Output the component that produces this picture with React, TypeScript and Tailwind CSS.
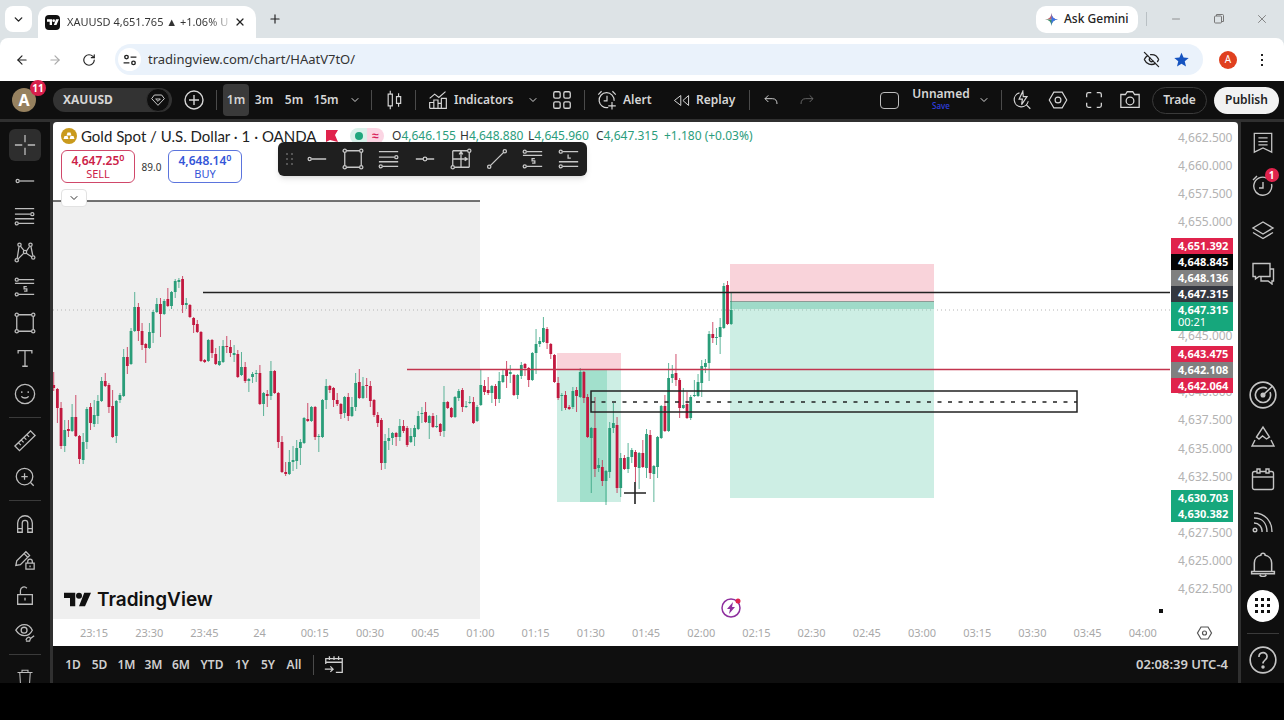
import React from "react";
import {
  ArrowLeft,
  ArrowRight,
  ChevronDown,
  EyeOff,
  Minus,
  Plus,
  RotateCw,
  X,
} from "lucide-react";
import clsx from "clsx";

const UP = "#2a9d79";
const DOWN = "#c2183f";

// [direction, high, body top, body bottom, low]
type Candle = [0 | 1, number, number, number, number];

const CANDLES: Candle[] = [
  [0, 372, 385, 388, 391], [0, 388, 389, 408, 423], [0, 402, 408, 446, 449], [1, 420, 430, 446, 452],
  [0, 420, 429, 431, 437], [1, 404, 417, 431, 432], [0, 395, 417, 436, 437], [0, 435, 436, 459, 464],
  [1, 433, 442, 460, 464], [1, 407, 409, 442, 449], [0, 403, 407, 423, 430], [1, 400, 415, 424, 427],
  [1, 395, 401, 416, 424], [1, 377, 381, 401, 402], [0, 373, 381, 386, 387], [0, 383, 385, 407, 413],
  [0, 390, 406, 437, 438], [1, 400, 401, 436, 443], [1, 393, 395, 400, 403], [1, 349, 357, 396, 397],
  [0, 347, 357, 366, 374], [1, 328, 331, 364, 365], [1, 292, 307, 331, 332], [0, 303, 307, 331, 341],
  [0, 323, 331, 345, 350], [0, 343, 344, 348, 363], [1, 323, 332, 348, 349], [1, 310, 312, 333, 343],
  [1, 298, 304, 312, 313], [0, 298, 304, 314, 337], [1, 299, 301, 314, 315], [0, 288, 299, 306, 307],
  [1, 291, 292, 306, 309], [1, 279, 281, 292, 298], [1, 278, 280, 282, 288], [0, 276, 279, 305, 313],
  [1, 298, 303, 305, 309], [0, 304, 305, 317, 318], [0, 317, 318, 325, 333], [0, 320, 324, 332, 333],
  [0, 331, 332, 361, 362], [0, 359, 360, 362, 363], [1, 339, 340, 361, 362], [0, 339, 340, 353, 358],
  [0, 348, 354, 364, 365], [1, 346, 361, 365, 366], [1, 340, 346, 362, 363], [0, 336, 346, 347, 353],
  [0, 340, 347, 353, 357], [1, 345, 353, 355, 362], [0, 350, 354, 377, 378], [1, 352, 367, 375, 376],
  [0, 362, 367, 381, 383], [1, 378, 379, 381, 392], [1, 372, 374, 377, 383], [1, 370, 373, 374, 382],
  [0, 365, 373, 404, 405], [1, 392, 393, 404, 416], [0, 390, 394, 396, 407], [1, 361, 371, 396, 400],
  [0, 370, 371, 393, 394], [0, 392, 393, 442, 448], [0, 436, 442, 472, 473], [0, 462, 472, 474, 476],
  [1, 450, 462, 474, 475], [1, 446, 460, 462, 471], [1, 440, 448, 461, 469], [1, 439, 442, 448, 465],
  [1, 417, 418, 443, 444], [0, 403, 419, 421, 422], [1, 406, 407, 421, 422], [0, 406, 407, 437, 440],
  [1, 434, 436, 437, 452], [1, 399, 400, 437, 438], [1, 379, 386, 400, 409], [0, 385, 386, 390, 393],
  [0, 387, 388, 400, 407], [0, 393, 400, 404, 406], [0, 403, 404, 414, 419], [1, 396, 397, 413, 418],
  [0, 393, 397, 416, 421], [1, 397, 407, 416, 417], [1, 373, 383, 407, 411], [0, 369, 382, 398, 399],
  [1, 377, 386, 398, 399], [0, 378, 385, 386, 398], [0, 381, 386, 401, 407], [0, 399, 400, 415, 417],
  [0, 412, 415, 423, 427], [0, 418, 420, 463, 470], [1, 434, 441, 463, 469], [1, 428, 438, 441, 450],
  [1, 432, 433, 438, 445], [0, 432, 433, 437, 446], [1, 419, 426, 437, 441], [0, 420, 426, 431, 433],
  [0, 426, 428, 445, 447], [1, 428, 436, 442, 443], [1, 425, 428, 437, 446], [1, 411, 416, 429, 430],
  [1, 407, 413, 414, 423], [0, 402, 412, 422, 423], [1, 415, 416, 423, 439], [0, 413, 416, 427, 428],
  [1, 415, 426, 427, 428], [0, 423, 424, 432, 436], [1, 386, 402, 431, 437], [0, 401, 402, 408, 409],
  [0, 407, 408, 417, 418], [1, 396, 397, 417, 418], [1, 389, 391, 398, 401], [0, 388, 390, 407, 412],
  [1, 401, 406, 407, 408], [1, 396, 402, 403, 404], [0, 397, 402, 423, 424], [1, 405, 407, 421, 422],
  [1, 370, 385, 405, 406], [0, 380, 386, 392, 395], [0, 377, 390, 393, 395], [1, 385, 386, 393, 403],
  [0, 384, 386, 399, 406], [1, 372, 381, 399, 403], [1, 369, 375, 382, 383], [0, 361, 370, 376, 388],
  [1, 365, 372, 374, 383], [0, 374, 375, 395, 396], [1, 374, 375, 395, 399], [1, 362, 365, 376, 379],
  [0, 363, 364, 368, 376], [0, 367, 368, 380, 387], [1, 352, 353, 380, 381], [1, 329, 344, 353, 374],
  [1, 337, 341, 344, 347], [1, 317, 328, 342, 343], [0, 327, 329, 343, 349], [0, 343, 344, 354, 359],
  [0, 354, 355, 382, 383], [0, 377, 383, 398, 400], [1, 393, 395, 396, 411], [0, 391, 395, 408, 410],
  [0, 405, 407, 409, 410], [1, 387, 391, 407, 409], [0, 387, 390, 396, 412], [1, 368, 372, 397, 398],
  [0, 371, 372, 398, 403], [0, 394, 397, 437, 438], [1, 427, 428, 438, 493], [0, 397, 428, 469, 477],
  [1, 458, 465, 468, 472], [0, 460, 467, 481, 486], [1, 470, 471, 481, 505], [1, 422, 428, 472, 478],
  [1, 403, 423, 428, 433], [0, 417, 425, 488, 493], [1, 453, 458, 488, 497], [0, 455, 458, 469, 470],
  [1, 443, 457, 469, 473], [1, 448, 450, 457, 463], [0, 450, 452, 467, 482], [1, 452, 453, 468, 489],
  [0, 440, 453, 467, 468], [1, 429, 434, 468, 478], [0, 430, 435, 473, 479], [1, 465, 466, 474, 502],
  [1, 436, 437, 467, 478], [1, 405, 406, 438, 439], [0, 395, 406, 431, 432], [1, 363, 378, 431, 432],
  [1, 365, 374, 378, 383], [0, 354, 373, 380, 386], [0, 378, 380, 408, 418], [1, 388, 405, 408, 409],
  [0, 392, 404, 418, 419], [1, 395, 397, 418, 420], [1, 380, 395, 396, 397], [1, 374, 382, 396, 397],
  [1, 360, 366, 383, 397], [1, 359, 363, 367, 373], [1, 331, 334, 363, 381], [0, 322, 334, 338, 343],
  [1, 328, 337, 338, 345], [1, 318, 327, 337, 354], [1, 283, 286, 328, 329], [0, 281, 285, 324, 325],
  [1, 293, 310, 324, 325],
];

const PRICE_TICKS: [string, number][] = [
  ["4,662.500", 138], ["4,660.000", 166], ["4,657.500", 194], ["4,655.000", 222],
  ["4,645.000", 336], ["4,640.000", 392], ["4,637.500", 420], ["4,635.000", 449],
  ["4,632.500", 477], ["4,627.500", 533], ["4,625.000", 561], ["4,622.500", 589],
];

// text, label top, height, fill
const PRICE_TAGS: [string, number, number, string][] = [
  ["4,651.392", 238, 16, "#e0234c"],
  ["4,648.845", 254, 16, "#050505"],
  ["4,648.136", 270, 16, "#808080"],
  ["4,647.315", 286, 16, "#34373f"],
  ["4,647.315", 302, 29, "#16a77c"],
  ["4,643.475", 346, 16, "#e0234c"],
  ["4,642.108", 362, 16, "#808080"],
  ["4,642.064", 378, 15, "#e0234c"],
  ["4,630.703", 490, 16, "#16a77c"],
  ["4,630.382", 506, 16, "#16a77c"],
];

const TIMES = [
  "23:15", "23:30", "23:45", "24", "00:15", "00:30", "00:45", "01:00", "01:15", "01:30",
  "01:45", "02:00", "02:15", "02:30", "02:45", "03:00", "03:15", "03:30", "03:45", "04:00",
];

const RANGES: [string, string][] = [
  ["1D", "w-[26px]"], ["5D", "w-[27px]"], ["1M", "w-[27px]"], ["3M", "w-[27px]"], ["6M", "w-[28px]"],
  ["YTD", "w-[34px]"], ["1Y", "w-[26px]"], ["5Y", "w-[26px]"], ["All", "w-[26px]"],
];

interface IconProps {
  children: React.ReactNode;
  size?: number;
  className?: string;
}

const Icon: React.FC<IconProps> = ({ children, size = 24, className }) => (
  <svg
    width={size}
    height={size}
    viewBox="0 0 24 24"
    fill="none"
    stroke="currentColor"
    strokeWidth="1.400"
    className={clsx("shrink-0", className)}
    aria-hidden="true"
  >
    {children}
  </svg>
);

const icons = {
  cross: <path d="M12 1v8M12 15v8M1 12h8M15 12h8" />,
  ray: (
    <>
      <circle cx="4" cy="12" r="1.7" />
      <path d="M6 12h16" />
    </>
  ),
  fib: (
    <>
      <path d="M1 4h21M1 10h17M1 15h21M5 20h17" />
      <circle cx="20" cy="10" r="1.7" />
      <circle cx="3" cy="20" r="1.7" />
    </>
  ),
  pattern: (
    <>
      <path d="M3.500 19 5.500 6M7 5.500l4 5M13 13l6.500 4.500M4.500 19.500l6-6M13.500 11l3.500-5M18.500 6l2 10" />
      <circle cx="3" cy="21" r="1.8" />
      <circle cx="6" cy="4" r="1.8" />
      <circle cx="12" cy="12" r="1.8" />
      <circle cx="18" cy="4" r="1.8" />
      <circle cx="21" cy="18" r="1.8" />
    </>
  ),
  forecast: (
    <>
      <path d="M5 4h17M1 8h21M5 20h17M14 11.500h-3v2.500h3v2.500h-3" />
      <circle cx="3" cy="4" r="1.7" />
      <circle cx="3" cy="20" r="1.7" />
    </>
  ),
  longPos: (
    <>
      <path d="M5 4h17M11 7v4h3M1 15h21M5 20h17" />
      <circle cx="3" cy="4" r="1.7" />
      <circle cx="3" cy="20" r="1.7" />
    </>
  ),
  rect: (
    <>
      <path d="M5 3h14M5 21h14M3 5v14M21 5v14" />
      <circle cx="3" cy="3" r="1.8" />
      <circle cx="21" cy="3" r="1.8" />
      <circle cx="3" cy="21" r="1.8" />
      <circle cx="21" cy="21" r="1.8" />
    </>
  ),
  text: <path d="M4.500 7V4h15v3M12 4v17M9 21h6" />,
  smile: (
    <>
      <circle cx="12" cy="12" r="10.500" />
      <path d="M8.500 9v2M15.500 9v2M8 14.500c2 2.500 6 2.500 8 0" />
    </>
  ),
  ruler: <path d="M1 17.500 18 1l5 5L6 22.500zM5 14l2.500 2.500M8 11l2.500 2.500M11 8l2.500 2.500M14 5l2.500 2.500" />,
  zoomIn: (
    <>
      <circle cx="11.500" cy="11.500" r="9" />
      <path d="M18 18l3.500 3.500M11.500 8v7M8 11.500h7" />
    </>
  ),
  magnet: <path d="M4 21V11a8 8 0 0 1 16 0v10h-5V11a3 3 0 0 0-6 0v10zM4 17h5M15 17h5" />,
  penLock: (
    <>
      <path d="M2 18l1-5L13 3l4 4L7 17zM11 5l4 4" />
      <path d="M13 15.500h9V22h-9zM15 15.500v-2a2.500 2.500 0 0 1 5 0v2M17.500 18v2" />
    </>
  ),
  unlock: <path d="M4 10.500h16V21H4zM7 10V6a4 4 0 0 1 7-2.500M12 14v3" />,
  eye: (
    <>
      <path d="M2 10c5-8 14-8 18 0-4 8-13 8-18 0z" />
      <circle cx="11" cy="10" r="3.200" />
      <path d="M13 21c1-4 4-4 5-2l4-3M13 22h4l1-3" />
    </>
  ),
  trash: <path d="M2 6h20M8 6V3h8v3M5 6l1 16h12l1-16" />,
  hLine: (
    <>
      <path d="M2 12h8M14 12h8" />
      <circle cx="12" cy="12" r="2" />
    </>
  ),
  range: (
    <>
      <path d="M3 3h16M21 5v16M3 3v16M5 21h16M3 12h16M12 4v17M10 7l2-3 2 3M16 10l3 2-3 2" />
      <circle cx="21" cy="3" r="1.8" />
      <circle cx="3" cy="21" r="1.8" />
    </>
  ),
  trend: (
    <>
      <path d="M5 19 19 5" />
      <circle cx="20.500" cy="3.500" r="1.8" />
      <circle cx="3.500" cy="20.500" r="1.8" />
    </>
  ),
  plusCircle: (
    <>
      <circle cx="12" cy="12" r="9" />
      <path d="M12 7v10M7 12h10" />
    </>
  ),
  gem: <path d="M6.500 4.500h11L21.500 10 12 20 2.500 10zM8.500 10.500h7L12 14z" />,
  candles: <path d="M5 5h5v14H5zM7.500 1v4M7.500 19v4M15 8h5v8h-5zM17.500 4v4M17.500 16v4" />,
  indicators: <path d="M2 10l6-5 5 4 8-7M2 22v-7h5v7M7 22V12h5v10M12 22v-6h4v6M16 22V10h6v12zM2 22h20" />,
  grid: (
    <>
      <rect x="3" y="3" width="7" height="7" rx="1.500" />
      <rect x="14" y="3" width="7" height="7" rx="1.500" />
      <rect x="3" y="14" width="7" height="7" rx="1.500" />
      <rect x="14" y="14" width="7" height="7" rx="1.500" />
    </>
  ),
  alert: (
    <path d="M20.500 13a9 9 0 1 0-7 8M12 7v6H8M18 14.500v9M13.500 19h9M1.500 5.500l4-4M22.500 5.500l-4-4" />
  ),
  clock: <path d="M20.500 10a9 9 0 1 1-5-6M12 8v6H8M2 6l4-4" />,
  replay: <path d="M11 5v14l-9-7zM22 5v14l-8-7z" />,
  undo: <path d="M8 5 3 10l5 5M3 10h11c5 0 7 3 7 8" />,
  redo: <path d="M16 5l5 5-5 5M21 10H10c-5 0-7 3-7 8" />,
  quickSearch: (
    <path d="M9 3.500a8.500 8.500 0 1 0 10.500 10M17 17.500l5 5M13 1.500 8.500 11h4l-1 6.500L18 8h-4.500z" />
  ),
  hex: (
    <>
      <path d="M7 2.500h10l5.500 9.500-5.500 9.500H7L1.500 12z" />
      <circle cx="12" cy="12" r="3.500" />
    </>
  ),
  full: <path d="M4 9V6a2 2 0 0 1 2-2h3M15 4h3a2 2 0 0 1 2 2v3M20 15v3a2 2 0 0 1-2 2h-3M9 20H6a2 2 0 0 1-2-2v-3" />,
  camera: (
    <>
      <path d="M2 6h5l2-3h6l2 3h5v14H2z" />
      <circle cx="12" cy="13" r="4.200" />
    </>
  ),
  watch: <path d="M2.500 1.500h19V22L12 17.500 2.500 22zM7 6.500h10M7 10.500h10M7 14h10" />,
  layers: <path d="M12 4l10 6-10 6-10-6zM2 14.500l10 6 10-6" />,
  chat: <path d="M2 2.500h17v13H8L4.500 18v-2.500H2zM19 8h3.500v12H21v3l-4-3h-7v-4.500" />,
  radar: (
    <>
      <circle cx="12" cy="12" r="11" />
      <path d="M15.500 6.500a6.500 6.500 0 1 0 2.500 3M12 12l8-7.500" />
      <circle cx="12" cy="12" r="1.500" fill="currentColor" />
    </>
  ),
  ideas: <path d="M5.500 12 12 2l6.500 10-3 2-4-3-3.500 3zM4 15l-3 6h22l-3-6" />,
  calendar: (
    <>
      <rect x="1.500" y="4.500" width="21" height="18" rx="2" />
      <path d="M1.500 10h21" />
      <path d="M6 2h3v4H6zM15 2h3v4h-3z" fill="#0f0f0f" />
    </>
  ),
  feed: (
    <>
      <circle cx="4" cy="20" r="1.800" />
      <path d="M3 13a8 8 0 0 1 8 9M3 8c8 0 13 5 13 14M3 3c11 0 18 8 18 19" />
    </>
  ),
  bell: <path d="M4 19V11c0-4 3-6.500 6-7a2 2 0 0 1 4 0c3 .5 6 3 6 7v8M1.500 19h21v2h-21zM9 22c1 2 5 2 6 0" />,
  help: (
    <>
      <circle cx="12" cy="12" r="11" />
      <path d="M8.500 9.500c0-5 7-5 7-.5 0 3-3.500 3-3.500 6" />
      <circle cx="12" cy="18" r=".8" />
    </>
  ),
  goTo: <path d="M3 11V5h18v15h-7M3 9h18M7 2.500v4M12 2.500v4M17 2.500v4M2 16.500h9M8 13.500l3 3-3 3" />,
};

type IconName = keyof typeof icons;

interface ToolButtonProps {
  icon: IconName;
  label: string;
  size?: number;
  className?: string;
}

const ToolButton: React.FC<ToolButtonProps> = ({ icon, label, size = 22, className }) => (
  <button
    aria-label={label}
    className={clsx("flex h-8 shrink-0 items-center justify-center rounded-md", className)}
  >
    <Icon size={size}>{icons[icon]}</Icon>
  </button>
);

const Divider = () => <div className="h-5 w-px shrink-0 bg-[#4a4a4a]" />;

const BrowserChrome = () => (
  <header className="bg-[#dde3e6] font-['Noto_Sans',sans-serif] text-[#222]">
    <div className="flex h-[38px] items-center pl-[5px]">
      <button aria-label="Search tabs" className="flex h-[26px] w-[27px] items-center justify-center rounded-lg bg-white">
        <ChevronDown size={13} strokeWidth={2.500} />
      </button>
      <div className="ml-1.5 flex h-8 w-[218px] items-center self-end rounded-t-xl bg-white pr-2.5 pl-[7px]">
        <div className="flex size-[15px] items-center justify-center rounded-sm bg-[#111] text-white">
          <TvMark className="w-3" />
        </div>
        <span className="ml-[7px] flex-1 bg-linear-to-r from-[#333] from-85% to-white bg-clip-text text-[11px] whitespace-nowrap text-transparent">
          XAUUSD 4,651.765 ▲ +1.06% U
        </span>
        <button aria-label="Close tab">
          <X size={12} strokeWidth={2.500} />
        </button>
      </div>
      <button aria-label="New tab" className="ml-3">
        <Plus size={14} strokeWidth={2} />
      </button>
      <button className="ml-auto flex h-[27px] w-[102px] items-center gap-1.5 rounded-[10px] bg-white pl-[9px] text-xs font-medium">
        <svg width="13" height="13" viewBox="0 0 14 14" aria-hidden="true">
          <path d="M7 0c.5 4.500 2.500 6.500 7 7H0c4.500-.5 6.500-2.500 7-7z" fill="#c2606b" />
          <path d="M0 7h14c-4.500.5-6.500 2.500-7 7-.5-4.500-2.500-6.500-7-7z" fill="#3f8f6a" />
          <path d="M7 0c.5 4.500 2.500 6.500 7 7-4.500.5-6.500 2.500-7 7z" fill="#3f74e8" />
        </svg>
        Ask Gemini
      </button>
      <div className="ml-2 h-3.5 w-px bg-[#b9c0c4]" />
      <button aria-label="Minimize" className="ml-[23px] text-[#777]">
        <Minus size={12} strokeWidth={1.500} />
      </button>
      <button aria-label="Restore" className="ml-[31px] text-[#777]">
        <Icon size={12}>
          <g strokeWidth="2">
            <rect x="3" y="6" width="14" height="14" rx="2" />
            <path d="M7 6V3h12a2 2 0 0 1 2 2v12h-4" />
          </g>
        </Icon>
      </button>
      <button aria-label="Close window" className="mr-[15px] ml-[30px] text-[#777]">
        <X size={14} strokeWidth={1.500} />
      </button>
    </div>
    <div className="flex h-[43px] items-center rounded-t-lg bg-white pr-[13px] pl-[15px]">
      <button aria-label="Back" className="w-[33px]">
        <ArrowLeft size={14} />
      </button>
      <button aria-label="Forward" className="w-[34px] text-[#aaa]">
        <ArrowRight size={14} />
      </button>
      <button aria-label="Reload" className="w-[33px]">
        <RotateCw size={14} />
      </button>
      <div className="flex h-[31px] flex-1 items-center rounded-full bg-[#eaf2fb] pr-3.5 pl-[3px]">
        <div className="flex size-[23px] items-center justify-center rounded-full bg-white">
          <Icon size={14}>
            <g strokeWidth="2.400">
              <circle cx="6" cy="7" r="3" />
              <path d="M13 7h10M1 17h10" />
              <circle cx="18" cy="17" r="3" />
            </g>
          </Icon>
        </div>
        <input
          aria-label="Address"
          defaultValue="tradingview.com/chart/HAatV7tO/"
          className="ml-[7px] min-w-0 flex-1 bg-transparent text-[13px] text-[#333] outline-none"
        />
        <button aria-label="Tracking protection">
          <EyeOff size={17} strokeWidth={1.800} />
        </button>
        <button aria-label="Bookmark" className="ml-3.5 text-[#1553c0]">
          <svg width="15" height="15" viewBox="0 0 24 24" fill="currentColor" aria-hidden="true">
            <path d="M12 1l3.300 7.700 8.200.7-6.300 5.400 2 8.200-7.200-4.400L4.800 23l2-8.200L.5 9.400l8.200-.7z" />
          </svg>
        </button>
      </div>
      <button className="ml-4 size-[18px] rounded-full bg-[#e0401f] text-[10px] text-white">A</button>
      <button aria-label="Menu" className="ml-4 flex w-[18px] flex-col items-center gap-[3px]">
        <span className="size-0.5 bg-[#222]" />
        <span className="size-0.5 bg-[#222]" />
        <span className="size-0.5 bg-[#222]" />
      </button>
    </div>
  </header>
);

const TvMark: React.FC<{ className?: string }> = ({ className }) => (
  <svg viewBox="0 0 36 20" fill="currentColor" className={className} aria-hidden="true">
    <path d="M0 1h15v18H8V8H0zM27 1h9l-8 18h-8z" />
    <circle cx="20" cy="5" r="4" />
  </svg>
);

const TopBar = () => (
  <div className="flex h-[38px] items-center bg-[#0f0f0f] text-xs font-semibold text-[#d6d6d6]">
    <button aria-label="Account" className="relative ml-3 flex size-6 items-center justify-center rounded-full bg-[#96815f] text-base font-bold text-white">
      A
      <span className="absolute -top-2 left-4.5 flex size-4 items-center justify-center rounded-full bg-[#d81f4b] text-[10px]">
        11
      </span>
    </button>
    <button className="ml-[17px] flex h-6 w-[119px] items-center justify-between rounded-full bg-[#333] pl-2.5 font-bold">
      XAUUSD
      <span className="mr-0.5 flex size-6 items-center justify-center rounded-full border border-[#333] bg-[#0f0f0f]">
        <Icon size={16}>{icons.gem}</Icon>
      </span>
    </button>
    <ToolButton icon="plusCircle" label="Compare" size={24} className="w-11" />
    <Divider />
    <button className="ml-1.5 h-8 w-[26px] rounded bg-[#3a3a3a]">1m</button>
    <button className="w-[30px]">3m</button>
    <button className="w-[30px]">5m</button>
    <button className="w-[34px]">15m</button>
    <button aria-label="Intervals" className="mr-1 flex w-6 justify-center">
      <ChevronDown size={12} />
    </button>
    <Divider />
    <ToolButton icon="candles" label="Chart type" size={20} className="w-[43px]" />
    <Divider />
    <button className="flex w-[104px] items-center gap-1.5 pl-3">
      <Icon size={20}>{icons.indicators}</Icon>
      Indicators
    </button>
    <button aria-label="Indicator templates" className="flex w-[26px] justify-center">
      <ChevronDown size={12} />
    </button>
    <ToolButton icon="grid" label="Layouts" className="mr-1.5 w-8" />
    <Divider />
    <button className="flex w-[76px] items-center gap-1.5 pl-3">
      <Icon size={20}>{icons.alert}</Icon>
      Alert
    </button>
    <button className="flex w-[88px] items-center gap-1.5 pl-3">
      <Icon size={17}>{icons.replay}</Icon>
      Replay
    </button>
    <Divider />
    <ToolButton icon="undo" label="Undo" size={16} className="w-[42px]" />
    <ToolButton icon="redo" label="Redo" size={16} className="w-[30px] text-[#6a6a6a]" />
    <button aria-label="Layout" className="mr-3 ml-auto h-[17px] w-[19px] rounded-sm border border-[#bdbdbd]" />
    <button className="flex w-[60px] flex-col items-center">
      <span className="leading-3">Unnamed</span>
      <span className="text-[8px] leading-3 font-medium text-[#2f3fe0]">Save</span>
    </button>
    <button aria-label="Manage layouts" className="mr-1 flex w-[26px] justify-center">
      <ChevronDown size={12} />
    </button>
    <Divider />
    <ToolButton icon="quickSearch" label="Quick search" size={20} className="ml-0.5 w-9" />
    <ToolButton icon="hex" label="Settings" size={20} className="w-9" />
    <ToolButton icon="full" label="Fullscreen" className="w-9" />
    <ToolButton icon="camera" label="Snapshot" className="w-9" />
    <button className="ml-1 h-[27px] w-[55px] rounded-full border border-[#3a3a3a]">Trade</button>
    <button className="mr-[5px] ml-[7px] h-[27px] w-[65px] rounded-full bg-[#f2f2f2] text-[#222]">Publish</button>
  </div>
);

const LEFT_TOOLS: [IconName, string][] = [
  ["cross", "Cross"], ["ray", "Horizontal ray"], ["fib", "Fib retracement"], ["pattern", "XABCD pattern"],
  ["forecast", "Short position"], ["rect", "Rectangle"], ["text", "Text"], ["smile", "Emoji"],
];

const LeftToolbar = () => (
  <aside className="flex w-[50px] shrink-0 flex-col items-center overflow-hidden bg-[#0f0f0f] pt-[7px] text-[#bdbdbd]">
    <div className="flex h-[281px] shrink-0 flex-col justify-between">
      {LEFT_TOOLS.map(([icon, label], i) => (
        <ToolButton key={icon} icon={icon} label={label} className={clsx("w-8", i === 0 && "bg-[#2e2e2e]")} />
      ))}
    </div>
    <div className="my-[7px] h-px w-8 shrink-0 bg-[#3a3a3a]" />
    <div className="flex flex-col gap-1">
      <ToolButton icon="ruler" label="Measure" className="w-8" />
      <ToolButton icon="zoomIn" label="Zoom in" className="w-8" />
    </div>
    <div className="my-[7px] h-px w-8 shrink-0 bg-[#3a3a3a]" />
    <div className="flex flex-col gap-1">
      <ToolButton icon="magnet" label="Magnet" className="w-8" />
      <ToolButton icon="penLock" label="Stay in drawing mode" className="w-8" />
      <ToolButton icon="unlock" label="Lock drawings" className="w-8" />
      <ToolButton icon="eye" label="Hide drawings" className="w-8" />
    </div>
    <div className="my-1.5 h-px w-8 shrink-0 bg-[#3a3a3a]" />
    <ToolButton icon="trash" label="Remove drawings" size={18} className="w-8" />
  </aside>
);

const RightToolbar = () => (
  <aside className="flex w-[43px] shrink-0 flex-col items-center bg-[#0f0f0f] pt-[5px] pb-[7px] text-[#c4c4c4]">
    <div className="flex h-[162px] flex-col justify-between">
      <ToolButton icon="watch" label="Watchlist" className="w-8" />
      <div className="relative">
        <ToolButton icon="clock" label="Alerts" size={24} className="w-8" />
        <span className="absolute -top-0.5 left-4.5 flex size-3.5 items-center justify-center rounded-full bg-[#e0234c] text-[10px] font-bold text-white">
          1
        </span>
      </div>
      <ToolButton icon="layers" label="Object tree" size={24} className="w-8" />
      <ToolButton icon="chat" label="Chats" size={24} className="w-8" />
    </div>
    <div className="mt-auto flex h-[243px] flex-col justify-between">
      <ToolButton icon="radar" label="Screeners" size={28} className="w-8" />
      <ToolButton icon="ideas" label="Ideas" size={24} className="w-8" />
      <ToolButton icon="calendar" label="Calendars" size={24} className="w-8" />
      <ToolButton icon="feed" label="News" size={24} className="w-8" />
      <ToolButton icon="bell" label="Notifications" size={26} className="w-8" />
      <button aria-label="Products" className="grid size-8 grid-cols-3 place-content-center gap-[3px] rounded-full bg-white px-2">
        {Array.from({ length: 9 }, (_, i) => (
          <span key={i} className="size-[3px] justify-self-center bg-[#111]" />
        ))}
      </button>
    </div>
    <div className="mt-[11px] mb-2.5 h-px w-8 bg-[#3a3a3a]" />
    <ToolButton icon="help" label="Help" size={28} className="w-8" />
  </aside>
);

const Chart = () => (
  <svg
    viewBox="53 122 1185 524"
    preserveAspectRatio="xMaxYMin slice"
    className="block h-full w-full font-['Noto_Sans',sans-serif]"
    role="img"
    aria-label="Gold Spot / U.S. Dollar, 1 minute chart"
  >
    <rect x="53" y="201" width="427" height="418" fill="#efefef" />
    <path d="M53 201h427" stroke="#444" strokeWidth="1.500" />
    <path d="M53 310h1117" stroke="#b5b5b5" strokeDasharray="1 3" />

    {/* Closed trade */}
    <rect x="557" y="353" width="64" height="16" fill="#f9d3da" />
    <rect x="557" y="369" width="64" height="133" fill="#cdeee4" />
    <rect x="580" y="369" width="27" height="133" fill="#a2e0cc" />

    {/* Open trade */}
    <rect x="730" y="264" width="204" height="37" fill="#f9d3da" />
    <rect x="730" y="301" width="204" height="197" fill="#cdeee4" />
    <rect x="730" y="301" width="204" height="8" fill="#9fdac8" />
    <path d="M730 301.500h204" stroke="#8d9a95" />
    <path d="M734 310h200" stroke="#9fbfb4" strokeDasharray="1 3" />

    {CANDLES.map(([up, high, top, bottom, low], i) => {
      const x = 53.700 + i * 3.682;
      const color = up ? UP : DOWN;
      return (
        <g key={i} fill={color}>
          <rect x={x - 0.500} y={high} width="1" height={low - high} opacity="0.750" />
          <rect x={x - 1.400} y={top} width="2.800" height={bottom - top} />
        </g>
      );
    })}

    <path d="M203 292.500h967" stroke="#222" strokeWidth="1.500" />
    <path d="M407 369.500h763" stroke="#c2344e" strokeWidth="1.700" />
    <rect x="591" y="391" width="486" height="21" fill="none" stroke="#222" strokeWidth="1.500" />
    <path d="M591 402h486" stroke="#222" strokeWidth="1.300" strokeDasharray="4 6.500" />
    <path d="M624 493h22M635 482v22" stroke="#222" strokeWidth="1.600" />
    <rect x="1159" y="609" width="4" height="4" fill="#111" />

    <circle cx="731" cy="608" r="9" fill="#fff" stroke="#8e2f9e" strokeWidth="1.500" />
    <path d="M733 602l-6 7h3l-1 5 6-7h-3z" fill="#8e2f9e" />
    <circle cx="738" cy="601" r="2.500" fill="#e0234c" />

    <g fontSize="12" fill="#b2b2b2" textAnchor="start">
      {PRICE_TICKS.map(([label, y]) => (
        <text key={label} x="1178" y={y + 4}>{label}</text>
      ))}
    </g>
    <g fontSize="11" fontWeight="700" fill="#fff">
      {PRICE_TAGS.map(([label, y, height, fill]) => (
        <g key={`${label}-${y}`}>
          <rect x="1171" y={y} width="62" height={height} fill={fill} />
          <text x="1178" y={y + 12}>{label}</text>
        </g>
      ))}
      <text x="1178" y="326" fontWeight="400">00:21</text>
    </g>
    <g fontSize="11" fill="#a8a8a8" textAnchor="middle">
      {TIMES.map((time, i) => (
        <text key={time} x={94 + i * 55.200} y="637">{time}</text>
      ))}
    </g>
    <g fill="none" stroke="#555" strokeWidth="1.200">
      <path d="M1201 627h7l3.500 6-3.500 6h-7l-3.500-6z" />
      <circle cx="1204.500" cy="633" r="2" />
    </g>
  </svg>
);

const FLOATING: [IconName, string][] = [
  ["ray", "Horizontal ray"], ["rect", "Rectangle"], ["fib", "Fib retracement"], ["hLine", "Horizontal line"],
  ["range", "Date and price range"], ["trend", "Trend line"], ["forecast", "Short position"], ["longPos", "Long position"],
];

const OHLC: [string, string][] = [
  ["O", "4,646.155"], ["H", "4,648.880"], ["L", "4,645.960"], ["C", "4,647.315"],
];

const Legend = () => (
  <div className="absolute inset-x-0 top-0 px-2 pt-1">
    <div className="flex h-5 items-center whitespace-nowrap">
      <svg width="16" height="16" viewBox="0 0 16 16" aria-hidden="true">
        <circle cx="8" cy="8" r="8" fill="#c99a1c" />
        <path d="M6.500 4.500h3l1 3h-5zM3.500 8h3l1 3h-5zM9.500 8h3l1 3h-5z" fill="#fff" />
      </svg>
      <h1 className="ml-1 w-[245px] font-[Lato,sans-serif] text-[15px] text-[#222]">
        Gold Spot / U.S. Dollar · 1 · OANDA
      </h1>
      <svg width="12" height="12" viewBox="0 0 12 12" aria-hidden="true">
        <path d="M0 0h12L9 5l3 7-8-2-4 2z" fill="#e0234c" />
      </svg>
      <div className="ml-3 flex h-4 w-[34px] items-center overflow-hidden rounded-full text-xs">
        <span className="flex h-full flex-1 items-center justify-center bg-[#d9f1ea]">
          <span className="size-2 rounded-full bg-[#1fa67d]" />
        </span>
        <span className="flex h-full flex-1 items-center justify-center bg-[#fbd5e3] font-bold text-[#d81f5b]">≈</span>
      </div>
      <div className="ml-2 flex gap-1 text-xs text-[#2a9d7c]">
        {OHLC.map(([key, value]) => (
          <span key={key} className="w-16">
            <span className="text-[#333]">{key}</span>
            {value}
          </span>
        ))}
        <span>+1.180 (+0.03%)</span>
      </div>
    </div>
    <div className="mt-1 flex items-center text-xs leading-3.5">
      <button className="h-[33px] w-[74px] rounded-md border border-[#d0486a] bg-white text-[#cc2148]">
        <b className="block font-semibold">4,647.25<sup className="-top-1 text-[9px]">0</sup></b>
        <span className="block text-[11px] leading-3">SELL</span>
      </button>
      <span className="w-[33px] text-center text-[10px] text-[#333]">89.0</span>
      <button className="h-[33px] w-[74px] rounded-md border border-[#5b74dd] bg-white text-[#3556d8]">
        <b className="block font-semibold">4,648.14<sup className="-top-1 text-[9px]">0</sup></b>
        <span className="block text-[11px] leading-3">BUY</span>
      </button>
    </div>
    <button aria-label="Collapse legend" className="mt-1.5 flex h-[18px] w-[26px] items-center justify-center rounded-sm border border-[#e2e2e2] bg-white text-[#333]">
      <ChevronDown size={12} />
    </button>
  </div>
);

const FloatingToolbar = () => (
  <div className="absolute top-5 left-[225px] flex h-[34px] w-[309px] items-center rounded-md bg-[#1f1f1f] pl-2 text-[#c8c8c8] shadow-md">
    <div className="mr-1.5 grid w-[10px] grid-cols-2 gap-[3px]">
      {Array.from({ length: 6 }, (_, i) => (
        <span key={i} className="size-0.5 bg-[#555]" />
      ))}
    </div>
    {FLOATING.map(([icon, label]) => (
      <ToolButton key={icon} icon={icon} label={label} className="w-9" />
    ))}
  </div>
);

const BottomBar = () => (
  <footer className="flex h-[37px] items-center bg-[#0f0f0f] pr-2.5 pl-[7px] text-xs font-semibold text-[#cfcfcf]">
    {RANGES.map(([label, width]) => (
      <button key={label} className={width}>{label}</button>
    ))}
    <div className="ml-1.5 h-5 w-px bg-[#4a4a4a]" />
    <ToolButton icon="goTo" label="Go to date" className="ml-1 w-8" />
    <button className="ml-auto text-[13px]">02:08:39 UTC-4</button>
  </footer>
);

export default function App() {
  return (
    <div className="min-h-screen bg-black font-['Noto_Sans',sans-serif]">
      <BrowserChrome />
      <TopBar />
      <div className="flex h-[564px] bg-[#303030] pt-[3px]">
        <LeftToolbar />
        <main className="mx-[3px] flex min-w-0 flex-1 flex-col">
          <section className="relative h-[524px] overflow-hidden rounded-t bg-white">
            <Chart />
            <Legend />
            <FloatingToolbar />
            <div className="absolute bottom-8 left-[11px] flex items-center gap-1.5 text-[#111]">
              <TvMark className="w-[27px]" />
              <span className="font-[Inter,sans-serif] text-[19px] font-semibold">TradingView</span>
            </div>
          </section>
          <BottomBar />
        </main>
        <RightToolbar />
      </div>
    </div>
  );
}
